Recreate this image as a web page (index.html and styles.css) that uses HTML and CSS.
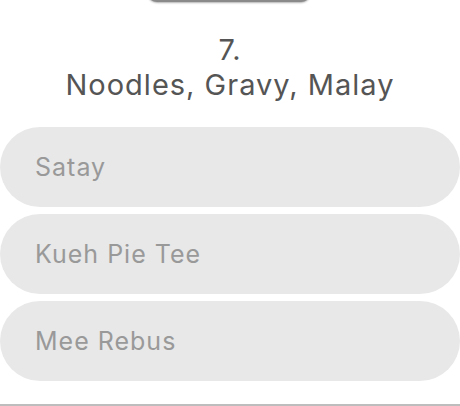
FILE: index.html
```html
<!DOCTYPE html>
<html>
<head>
<meta charset="utf-8">
<link rel="stylesheet" href="styles.css">
</head>
<body>
<div class="page">
  <div class="handle"></div>
  <h1 class="question">7.<br>Noodles, Gravy, Malay</h1>
  <div class="options">
    <button class="option">Satay</button>
    <button class="option">Kueh Pie Tee</button>
    <button class="option">Mee Rebus</button>
  </div>
  <div class="rule"></div>
</div>
</body>
</html>
```
FILE: styles.css
```css
html, body {
  margin: 0;
  padding: 0;
  background: #fff;
}
.page {
  width: 460px;
  height: 406px;
  overflow: hidden;
  display: flex;
  flex-direction: column;
  font-family: "Inter", "Liberation Sans", sans-serif;
}
.handle {
  align-self: center;
  width: 164px;
  height: 40px;
  margin-top: -38px;
  margin-left: -2px;
  background: #8a8a8a;
  border-radius: 10px;
  box-shadow: 0 1px 2px rgba(0,0,0,0.3);
}
.question {
  margin: 30px 0 0;
  font-weight: 400;
  font-size: 29px;
  line-height: 35px;
  letter-spacing: 1px;
  color: #555;
  text-align: center;
}
.options {
  margin-top: 25px;
  display: flex;
  flex-direction: column;
  gap: 7px;
}
.option {
  height: 80px;
  width: 460px;
  border: none;
  border-radius: 40px;
  background: #e8e8e8;
  text-align: left;
  padding: 0 0 0 35px;
  font-family: inherit;
  font-size: 25px;
  letter-spacing: 1px;
  color: #999;
}
.rule {
  margin-top: 23px;
  height: 2px;
  background: #bdbdbd;
}
```
